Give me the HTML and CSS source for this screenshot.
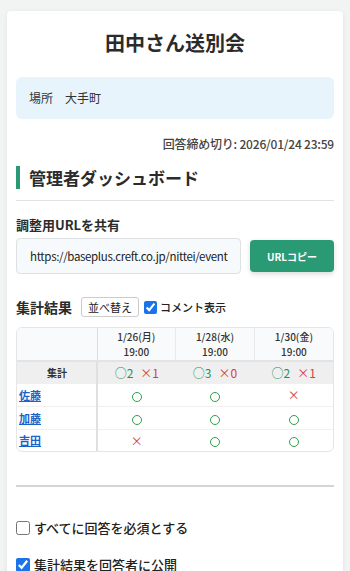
FILE: index.html
```html
<!DOCTYPE html>
<html lang="ja">
<head>
  <meta charset="UTF-8">
  <title>田中さん送別会</title>
  <meta name="viewport" content="width=device-width, initial-scale=1">
  <link rel="stylesheet" href="styles.css">
</head>
<body>
  <div class="card">
    <h1 class="title">田中さん送別会</h1>
    <div class="info">場所　大手町</div>
    <div class="deadline">回答締め切り: 2026/01/24 23:59</div>

    <h2 class="section"><span>管理者ダッシュボード</span></h2>

    <div class="label">調整用URLを共有</div>
    <div class="url-row">
      <input type="text" class="url-input" value="https://baseplus.creft.co.jp/nittei/event" readonly>
      <button class="copy-btn">URLコピー</button>
    </div>

    <div class="result-head">
      <span class="result-title">集計結果</span>
      <button class="sort-btn">並べ替え</button>
      <label class="check small"><input type="checkbox" checked> コメント表示</label>
    </div>

    <div class="table-wrap">
      <table class="result">
        <thead>
          <tr>
            <th></th>
            <th>1/26(月)<br>19:00</th>
            <th>1/28(水)<br>19:00</th>
            <th>1/30(金)<br>19:00</th>
          </tr>
        </thead>
        <tbody>
          <tr class="total">
            <td>集計</td>
            <td><span class="ok">○2</span><span class="ng">×1</span></td>
            <td><span class="ok">○3</span><span class="ng">×0</span></td>
            <td><span class="ok">○2</span><span class="ng">×1</span></td>
          </tr>
          <tr>
            <td><a href="#">佐藤</a></td>
            <td><i class="mark-ok"></i></td>
            <td><i class="mark-ok"></i></td>
            <td><span class="mark-ng">×</span></td>
          </tr>
          <tr>
            <td><a href="#">加藤</a></td>
            <td><i class="mark-ok"></i></td>
            <td><i class="mark-ok"></i></td>
            <td><i class="mark-ok"></i></td>
          </tr>
          <tr>
            <td><a href="#">吉田</a></td>
            <td><span class="mark-ng">×</span></td>
            <td><i class="mark-ok"></i></td>
            <td><i class="mark-ok"></i></td>
          </tr>
        </tbody>
      </table>
    </div>

    <hr class="divider">

    <label class="check option"><input type="checkbox"> すべてに回答を必須とする</label>
    <label class="check option"><input type="checkbox" checked> 集計結果を回答者に公開</label>
  </div>
</body>
</html>
```

FILE: styles.css
```css
* {
  box-sizing: border-box;
}

body {
  margin: 0;
  padding: 11px 7px 0;
  background: #f2f3f3;
  font-family: "Noto Sans CJK JP", "Noto Sans", sans-serif;
  color: #333;
  height: 571px;
  overflow: hidden;
}

.card {
  background: #fff;
  border-radius: 4px;
  box-shadow: 0 1px 4px rgba(0,0,0,0.08);
  padding: 18px 9px 40px;
}

.title {
  margin: 0;
  text-align: center;
  font-size: 20px;
  line-height: 28px;
  font-weight: 700;
  color: #2b2b2b;
}

.info {
  margin-top: 20px;
  background: #e7f4fb;
  border-radius: 6px;
  padding: 11px 13px;
  font-size: 12px;
  line-height: 20px;
  color: #333;
}

.deadline {
  margin-top: 16px;
  text-align: right;
  font-size: 12px;
  line-height: 18px;
  font-weight: 500;
  color: #444;
  letter-spacing: -0.2px;
}

.section {
  margin: 13px 0 0;
  padding-bottom: 11px;
  border-bottom: 1px solid #e2e2e2;
  font-size: 17px;
  font-weight: 700;
  color: #2b2b2b;
}

.section span {
  display: block;
  border-left: 4px solid #2a9a74;
  padding-left: 9px;
  line-height: 23px;
}

.label {
  margin-top: 14px;
  font-size: 13px;
  line-height: 20px;
  font-weight: 700;
  color: #2b2b2b;
}

.url-row {
  margin-top: 3px;
  display: flex;
  align-items: center;
  gap: 9px;
}

.url-input {
  flex: 1;
  min-width: 0;
  height: 36px;
  padding: 0 6px 0 13px;
  border: 1px solid #dde1e4;
  border-radius: 4px;
  background: #f7fafc;
  font-family: inherit;
  font-size: 11.5px;
  letter-spacing: -0.35px;
  color: #222;
}

.copy-btn {
  width: 84px;
  height: 32px;
  border: none;
  border-radius: 4px;
  background: #2a9a74;
  color: #fff;
  font-family: inherit;
  font-size: 10px;
  font-weight: 700;
  box-shadow: 0 2px 5px rgba(0,0,0,0.15);
}

.result-head {
  margin-top: 23px;
  display: flex;
  align-items: center;
}

.result-title {
  font-size: 14px;
  font-weight: 700;
  color: #2b2b2b;
  margin-right: 9px;
}

.sort-btn {
  height: 20px;
  padding: 0 6px;
  border: 1px solid #ccc;
  border-radius: 3px;
  background: #fff;
  font-family: inherit;
  font-size: 11px;
  color: #222;
  margin-right: 5px;
}

.check {
  display: flex;
  align-items: center;
  font-weight: 500;
  color: #222;
}

.check input {
  margin: 0 3px 0 0;
  width: 13px;
  height: 13px;
  accent-color: #1a73e8;
}

.check.small {
  font-size: 11px;
}

.table-wrap {
  margin-top: 10px;
  border: 1px solid #e6e6e6;
  border-radius: 6px;
  overflow: hidden;
}

.result {
  width: 100%;
  border-collapse: collapse;
  table-layout: fixed;
}

.result th {
  height: 31px;
  background: #f9fafb;
  font-size: 10px;
  line-height: 15px;
  font-weight: 500;
  color: #333;
  border-left: 1px solid #e9e9e9;
  border-bottom: 2px solid #e3e3e3;
}

.result th:first-child {
  width: 80px;
  border-left: none;
  border-right: 1px solid #ddd;
}

.result td {
  height: 23px;
  text-align: center;
  font-size: 11px;
  border-bottom: 1px solid #f0f0f0;
}

.result td:first-child {
  text-align: left;
  padding-left: 2px;
  border-right: 2px solid #e0e0e0;
}

.result tr:last-child td {
  border-bottom: none;
  height: 22px;
}

.result .total td {
  height: 22px;
  background: #efefef;
  font-size: 12px;
}

.result .total td:first-child {
  text-align: center;
  font-size: 10px;
  font-weight: 700;
  color: #333;
}

.ok {
  color: #1f8f5f;
  margin-right: 7px;
}

.ng {
  color: #d23f3f;
}

.result a {
  color: #1a64c8;
  font-weight: 700;
  font-size: 11px;
}

.mark-ok {
  display: inline-block;
  width: 10px;
  height: 10px;
  border: 1.5px solid #2aa04a;
  border-radius: 50%;
  vertical-align: middle;
}

.mark-ng {
  color: #d23f3f;
  font-size: 12px;
}

.divider {
  margin: 33px 0 0;
  border: none;
  border-top: 2px solid #d4d4d4;
}

.option {
  font-size: 13px;
  font-weight: 500;
  margin-top: 31px;
}

.option + .option {
  margin-top: 18px;
}

.option input {
  width: 14px;
  height: 14px;
  margin-right: 4px;
}
```
